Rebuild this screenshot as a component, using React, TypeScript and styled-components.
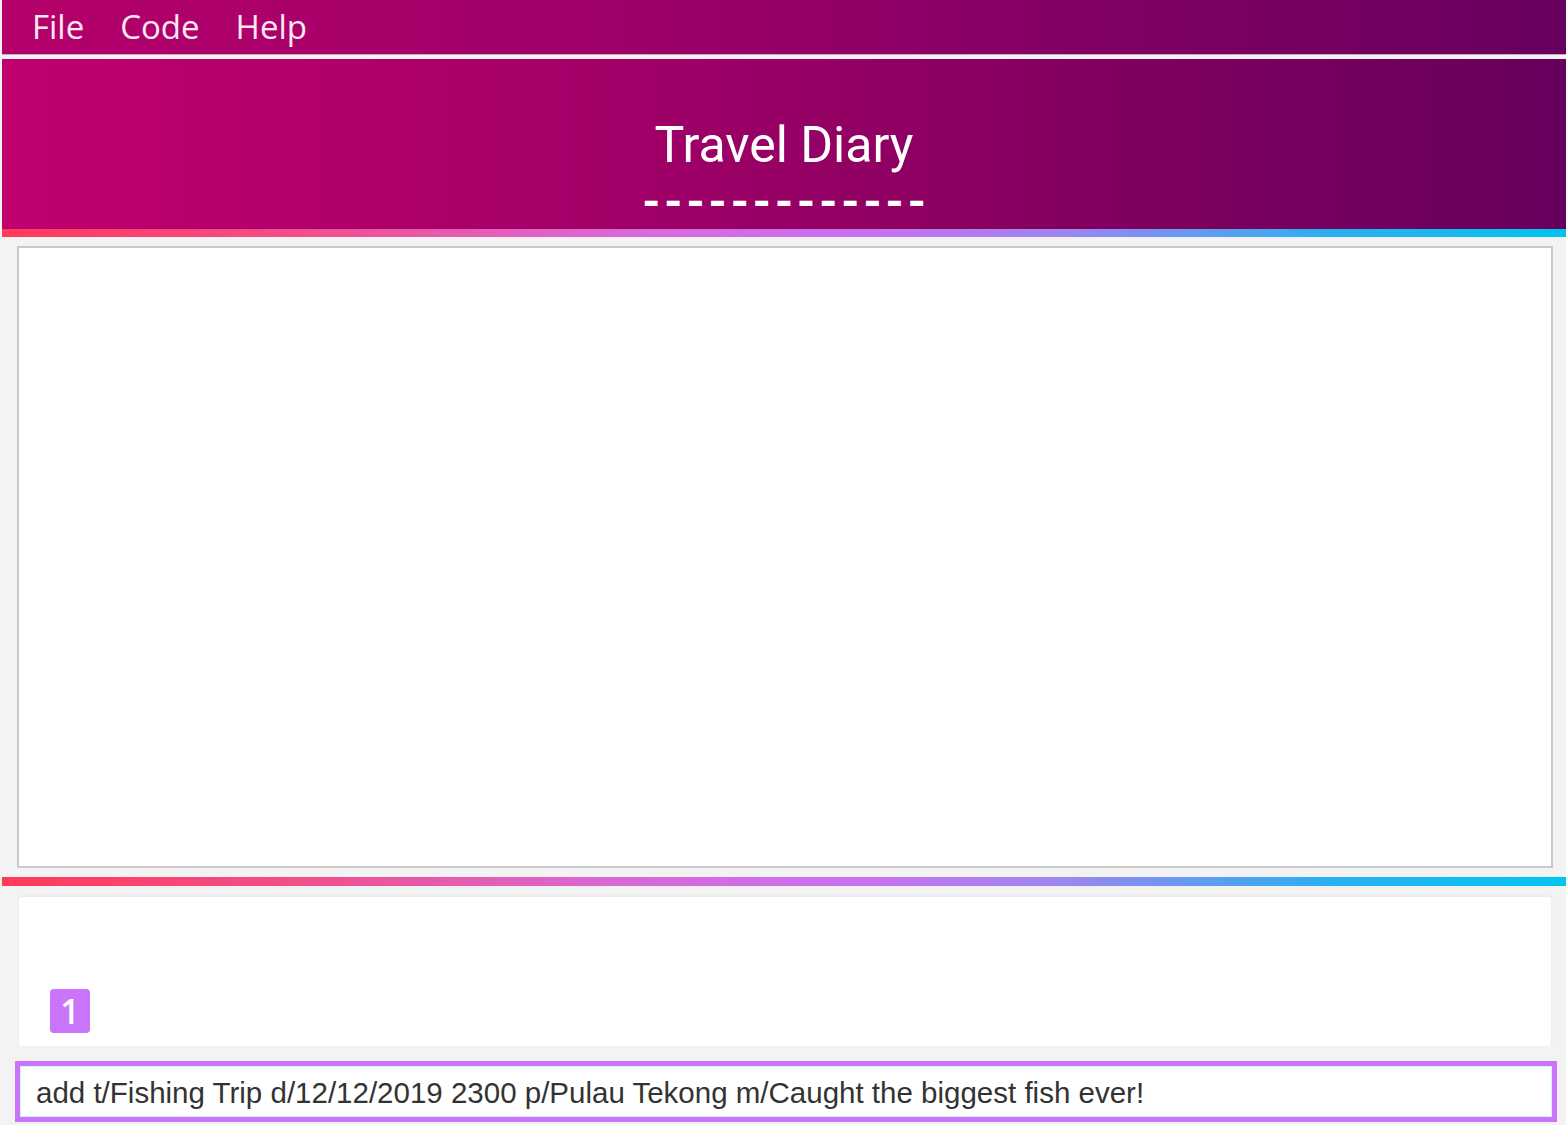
import React from "react";
import styled, { createGlobalStyle } from "styled-components";

const GlobalStyle = createGlobalStyle`
  html, body {
    margin: 0;
    padding: 0;
    background: #f3f3f3;
  }
  #root {
    width: 1566px;
    height: 1125px;
    overflow: hidden;
  }
`;

const Page = styled.div`
  display: flex;
  flex-direction: column;
  height: 1125px;
  padding-left: 2px;
  box-sizing: border-box;
  background: #f3f3f3;
`;

const MenuBar = styled.nav`
  height: 54px;
  flex-shrink: 0;
  display: flex;
  align-items: center;
  gap: 36px;
  padding-left: 30px;
  background: linear-gradient(90deg, #b5006b 0%, #9e0068 40%, #7d0062 75%, #68005e 100%);
  font-family: "Open Sans", "Noto Sans", sans-serif;
  font-size: 33px;
  color: #fbe7f2;
`;

const MenuItem = styled.span`
  line-height: 1;
  padding-bottom: 2px;
`;

const Separator = styled.div`
  height: 5px;
  flex-shrink: 0;
  background: #f2f2f2;
  border-top: 1px solid #c9a8c4;
  box-sizing: border-box;
`;

const Header = styled.header`
  height: 170px;
  flex-shrink: 0;
  display: flex;
  flex-direction: column;
  align-items: center;
  background: linear-gradient(90deg, #c0006f 0%, #a60069 35%, #82005f 70%, #66005c 100%);
  color: #ffffff;
  font-family: Roboto, "Noto Sans", sans-serif;
`;

const Title = styled.h1`
  margin: 61px 0 0 0;
  font-size: 50px;
  font-weight: 400;
  line-height: 1;
`;

const Dashes = styled.div`
  margin-top: 20px;
  margin-left: 4px;
  font-size: 46px;
  font-weight: 700;
  line-height: 24px;
  height: 24px;
  letter-spacing: 4px;
`;

const AccentBar = styled.div<{ $h: number }>`
  height: ${(p) => p.$h}px;
  flex-shrink: 0;
  background: linear-gradient(90deg, #ff3a5a 0%, #f0508e 20%, #d86ad8 40%, #c870f2 55%, #9c86f0 68%, #2ab0f0 85%, #00c4ee 100%);
`;

const Body = styled.div<{ $top: number }>`
  flex-shrink: 0;
  padding: ${(p) => p.$top}px 13px 0 15px;
`;

const DisplayPanel = styled.section`
  height: 622px;
  box-sizing: border-box;
  background: #ffffff;
  border: 2px solid #cacaca;
`;

const ResultPanel = styled.section`
  height: 149px;
  box-sizing: border-box;
  margin: 0 2px;
  background: #ffffff;
  border-radius: 3px;
  box-shadow: 0 -1px 3px rgba(0, 0, 0, 0.06);
  display: flex;
  align-items: flex-end;
  padding: 0 0 13px 31px;
`;

const Badge = styled.div`
  width: 40px;
  height: 44px;
  border-radius: 4px;
  background: #c974fb;
  color: #ffffff;
  font-family: "Open Sans", "Noto Sans", sans-serif;
  font-size: 34px;
  font-weight: 600;
  display: flex;
  align-items: center;
  justify-content: center;
  line-height: 1;
`;

const CommandBox = styled.div`
  height: 61px;
  margin: 0 -4px 0 -2px;
  box-sizing: border-box;
  border: 5px solid #c974fb;
  background: #ffffff;
  display: flex;
  align-items: center;
`;

const CommandInner = styled.div`
  flex: 1;
  height: 100%;
  box-sizing: border-box;
  border: 1px solid #d2f0f8;
  display: flex;
  align-items: center;
  padding: 2px 0 0 15px;
  font-family: "Liberation Sans", Arial, sans-serif;
  font-size: 29.5px;
  color: #333333;
  white-space: nowrap;
`;

export default function App() {
  return (
    <>
      <GlobalStyle />
      <Page>
        <MenuBar>
          <MenuItem>File</MenuItem>
          <MenuItem>Code</MenuItem>
          <MenuItem>Help</MenuItem>
        </MenuBar>
        <Separator />
        <Header>
          <Title>Travel Diary</Title>
          <Dashes>-------------</Dashes>
        </Header>
        <AccentBar $h={8} />
        <Body $top={9}>
          <DisplayPanel />
        </Body>
        <Body $top={9}>
          <div />
        </Body>
        <AccentBar $h={9} />
        <Body $top={11}>
          <ResultPanel>
            <Badge>1</Badge>
          </ResultPanel>
        </Body>
        <Body $top={15}>
          <CommandBox>
            <CommandInner>
              add t/Fishing Trip d/12/12/2019 2300 p/Pulau Tekong m/Caught the biggest fish ever!
            </CommandInner>
          </CommandBox>
        </Body>
      </Page>
    </>
  );
}
